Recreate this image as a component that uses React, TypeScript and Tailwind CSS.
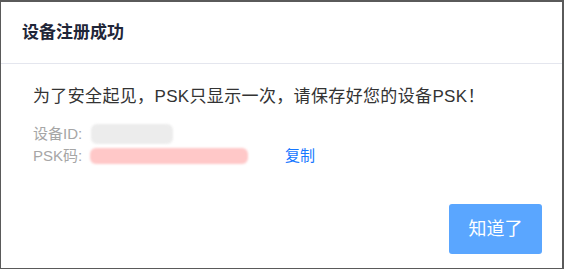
import React from "react";

export default function App() {
  const font = { fontFamily: '"Liberation Sans", "Noto Sans CJK SC", sans-serif' };
  return (
    <div className="w-[564px] h-[269px] bg-[#5a5a5a] pl-[1px] pr-[2px] pt-[2px] pb-[1px]" style={font}>
      <div className="w-full h-full bg-white flex flex-col">
        <div className="h-[62px] flex items-center pl-[21px] border-b border-[#e4e6ee] shrink-0">
          <span className="text-[17px] font-bold text-[#1f2638] leading-none">设备注册成功</span>
        </div>
        <div className="pl-[32px] pt-[21px]">
          <div className="text-[17px] leading-[24px] text-[#333333] tracking-[0.35px]">
            为了安全起见，PSK只显示一次，请保存好您的设备PSK！
          </div>
          <div className="mt-[14px] flex items-center h-[22px] text-[15px] text-[#a6a6a6]">
            <span className="w-[58px] shrink-0">设备ID:</span>
            <span className="w-[82px] h-[20px] rounded-[6px] bg-[#ececec] blur-[1px]" />
          </div>
          <div className="flex items-center h-[22px] text-[15px] text-[#a6a6a6]">
            <span className="w-[57px] shrink-0">PSK码:</span>
            <span className="w-[158px] h-[16px] rounded-[6px] bg-[#ffc8c8] blur-[1px]" />
            <span className="ml-[37px] text-[#1677ff] text-[15px]">复制</span>
          </div>
        </div>
        <div className="flex-1 flex items-end justify-end pr-[20px] pb-[14px]">
          <button className="w-[93px] h-[50px] rounded-[3px] bg-[#5aa6ff] text-white text-[18px] flex items-center justify-center">
            知道了
          </button>
        </div>
      </div>
    </div>
  );
}
